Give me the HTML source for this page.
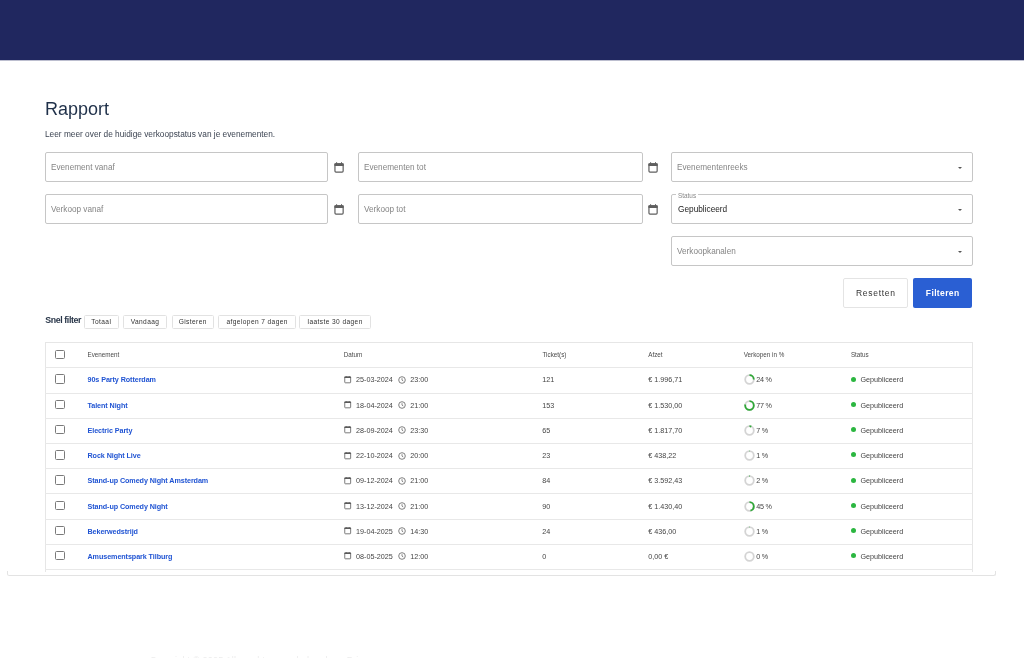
<!DOCTYPE html>
<html><head><meta charset="utf-8">
<style>
*{box-sizing:border-box;margin:0;padding:0}
html,body{width:1024px;height:658px;overflow:hidden;background:#fff;font-family:"Liberation Sans",sans-serif;color:#333}
#hdr{position:absolute;z-index:5;left:0;top:0;width:1024px;height:60.4px;background:#20275f}
#card{display:none}
h1{position:absolute;left:45px;top:98.9px;font-size:18px;font-weight:normal;color:#1f3049;white-space:nowrap}
.sub{position:absolute;left:45px;top:128.6px;font-size:8.3px;color:#3c4452;white-space:nowrap}
.fld{position:absolute;height:29.5px;border:1px solid #c6c6c6;border-radius:2px;background:#fff}
.fld span{position:absolute;left:5.3px;top:8.5px;font-size:9px;letter-spacing:0;color:#858585;white-space:nowrap;transform:scaleX(.91);transform-origin:0 0}
.fld .lg{position:absolute;left:4px;top:-3.3px;padding:0 2px;background:#fff;font-size:6.4px;letter-spacing:0;color:#888;transform:none}
.cal{position:absolute;width:12px;height:13px}
.arr{position:absolute;right:9.8px;top:13.8px;width:0;height:0;border-left:2.8px solid transparent;border-right:2.8px solid transparent;border-top:2.8px solid #555}
.btn{position:absolute;top:278.4px;height:29.5px;padding-top:1px;border-radius:2px;font-size:8.5px;letter-spacing:0.7px;text-align:center;line-height:29.5px;white-space:nowrap;padding-left:0.7px}
.snel{position:absolute;left:45.3px;top:315.4px;font-size:8.8px;font-weight:bold;color:#283548;letter-spacing:-0.4px;white-space:nowrap}
.chip{position:absolute;top:314.5px;height:14.2px;border:1px solid #e2e2e2;border-radius:1.5px;font-size:6.6px;letter-spacing:0.4px;padding-left:0.4px;color:#333;text-align:center;line-height:12.2px;white-space:nowrap}
#tbl{position:absolute;left:45px;top:342px;width:927.5px;height:229.7px;border:1px solid #e6e6e6;border-bottom:none}
.row,.hrow{position:absolute;left:45px;width:927.5px;height:25.2px;border-top:1px solid #e8e8e8}
.hrow{top:342px;border-top:none}
.row span,.row a,.hrow span{position:absolute;top:7.17px;white-space:nowrap;font-size:7.2px;color:#444}
.hrow span{font-size:6.3px;top:9.1px;color:#4a4a4a}
.cb{position:absolute;left:10.3px;top:6.2px;width:9.5px;height:9.5px;border:1.3px solid #7a7a7a;border-radius:1.5px}
.hrow .cb{top:7.5px}
.row a{left:42.5px;font-weight:bold;color:#2054d3;font-size:7.2px;letter-spacing:-0.08px;top:7.17px}
.ic{position:absolute;width:7.4px;height:7.4px;top:7.8px}
.cal2{position:absolute;left:299px;top:7.7px;width:8px;height:8px}
.clk{position:absolute;left:353px;top:7.7px;width:8px;height:8px}
.dt{left:311.1px}
.tm{left:365.3px}
.tk{left:497.25px}
.af{left:603.2px}
.ring{position:absolute;left:698.6px;top:6.2px;width:11px;height:11px}
.pc{left:711.2px;letter-spacing:-0.2px}
.dot{position:absolute;left:805.9px;top:8.5px;width:5px;height:5px;border-radius:50%;background:#2bb640}
.st{left:815.5px}
#foot{position:absolute;left:6.5px;top:571px;width:989px;height:4.8px;border:1px solid #e3e3e3;border-top:none;border-radius:0 0 2.5px 2.5px}
#tend{position:absolute;left:45px;top:569.2px;width:927.5px;height:1px;background:#e8e8e8}
</style></head><body><div id="wrap" style="position:absolute;left:0;top:0;width:1024px;height:658px;will-change:transform">
<div id="hdr"></div><div style="position:absolute;z-index:5;left:0;top:60px;width:1024px;height:1px;background:rgba(32,39,95,.3)"></div>
<div id="card"></div>
<h1>Rapport</h1>
<div class="sub">Leer meer over de huidige verkoopstatus van je evenementen.</div>

<div class="fld" style="left:45px;top:152px;width:283px"><span>Evenement vanaf</span></div>
<div class="fld" style="left:358px;top:152px;width:284.5px"><span>Evenementen tot</span></div>
<div class="fld" style="left:671px;top:152px;width:301.5px"><span>Evenementenreeks</span><i class="arr"></i></div>
<div class="fld" style="left:45px;top:194px;width:283px"><span>Verkoop vanaf</span></div>
<div class="fld" style="left:358px;top:194px;width:284.5px"><span>Verkoop tot</span></div>
<div class="fld" style="left:671px;top:194px;width:301.5px"><span class="lg">Status</span><span style="color:#222;font-size:8.8px;letter-spacing:0;top:8.7px;left:6.1px;transform:scaleX(.94)">Gepubliceerd</span><i class="arr"></i></div>
<div class="fld" style="left:671px;top:236px;width:301.5px"><span>Verkoopkanalen</span><i class="arr"></i></div>

<svg class="cal" style="left:333px;top:161px" viewBox="0 0 12 13"><rect x="1.95" y="2.8" width="8.2" height="8.3" rx="1" fill="none" stroke="#5f5f5f" stroke-width="1.2"/><rect x="1.35" y="2.3" width="9.4" height="2.6" rx="0.6" fill="#5f5f5f"/><rect x="3.2" y="1.1" width="0.9" height="2" fill="#5f5f5f"/><rect x="8" y="1.1" width="0.9" height="2" fill="#5f5f5f"/></svg>
<svg class="cal" style="left:333px;top:203px" viewBox="0 0 12 13"><rect x="1.95" y="2.8" width="8.2" height="8.3" rx="1" fill="none" stroke="#5f5f5f" stroke-width="1.2"/><rect x="1.35" y="2.3" width="9.4" height="2.6" rx="0.6" fill="#5f5f5f"/><rect x="3.2" y="1.1" width="0.9" height="2" fill="#5f5f5f"/><rect x="8" y="1.1" width="0.9" height="2" fill="#5f5f5f"/></svg>
<svg class="cal" style="left:647px;top:161px" viewBox="0 0 12 13"><rect x="1.95" y="2.8" width="8.2" height="8.3" rx="1" fill="none" stroke="#5f5f5f" stroke-width="1.2"/><rect x="1.35" y="2.3" width="9.4" height="2.6" rx="0.6" fill="#5f5f5f"/><rect x="3.2" y="1.1" width="0.9" height="2" fill="#5f5f5f"/><rect x="8" y="1.1" width="0.9" height="2" fill="#5f5f5f"/></svg>
<svg class="cal" style="left:647px;top:203px" viewBox="0 0 12 13"><rect x="1.95" y="2.8" width="8.2" height="8.3" rx="1" fill="none" stroke="#5f5f5f" stroke-width="1.2"/><rect x="1.35" y="2.3" width="9.4" height="2.6" rx="0.6" fill="#5f5f5f"/><rect x="3.2" y="1.1" width="0.9" height="2" fill="#5f5f5f"/><rect x="8" y="1.1" width="0.9" height="2" fill="#5f5f5f"/></svg>

<div class="btn" style="left:843px;width:65px;border:1px solid #e4e4e4;color:#333;line-height:27.5px">Resetten</div>
<div class="btn" style="left:913px;width:59px;background:#2a5fd3;color:#fff;font-weight:bold;letter-spacing:0.37px;padding-left:0.37px">Filteren</div>

<div class="snel">Snel filter</div>
<div class="chip" style="left:83.6px;width:35px">Totaal</div>
<div class="chip" style="left:123.1px;width:43.5px">Vandaag</div>
<div class="chip" style="left:171.5px;width:42.2px">Gisteren</div>
<div class="chip" style="left:218.4px;width:77.2px">afgelopen 7 dagen</div>
<div class="chip" style="left:299.4px;width:71.2px">laatste 30 dagen</div>

<div id="tbl"></div>
<div class="hrow"><i class="cb"></i><span style="left:42.5px">Evenement</span><span style="left:298.8px">Datum</span><span style="left:497.5px">Ticket(s)</span><span style="left:603.2px">Afzet</span><span style="left:698.7px">Verkopen in %</span><span style="left:805.9px">Status</span></div>
<div class="row" style="top:367.30px">
<i class="cb"></i><a>90s Party Rotterdam</a>
<svg class="cal2" viewBox="0 0 8 8"><rect x="0.75" y="1" width="5.9" height="5.8" rx="0.6" fill="none" stroke="#5a5a5a" stroke-width="0.8"/><rect x="0.35" y="0.6" width="6.7" height="1.5" rx="0.3" fill="#5a5a5a"/><rect x="1.9" y="0.1" width="0.6" height="1" fill="#5a5a5a"/><rect x="4.9" y="0.1" width="0.6" height="1" fill="#5a5a5a"/></svg><span class="dt">25-03-2024</span>
<svg class="clk" viewBox="0 0 8 8"><circle cx="4" cy="4" r="3.3" fill="none" stroke="#6a6a6a" stroke-width="0.85"/><path d="M4 2.2V4.1L5.3 5" fill="none" stroke="#6a6a6a" stroke-width="0.8"/></svg><span class="tm">23:00</span>
<span class="tk">121</span><span class="af">€ 1.996,71</span>
<svg class="ring" viewBox="0 0 11 11"><circle cx="5.5" cy="5.5" r="4.3" fill="none" stroke="#d4d4d4" stroke-width="1.8"/><circle cx="5.5" cy="5.5" r="4.3" fill="none" stroke="#2ea836" stroke-width="1.8" stroke-dasharray="6.48 27.02" transform="rotate(-90 5.5 5.5)"/></svg><span class="pc">24 %</span>
<i class="dot"></i><span class="st">Gepubliceerd</span>
</div>
<div class="row" style="top:392.51px">
<i class="cb"></i><a>Talent Night</a>
<svg class="cal2" viewBox="0 0 8 8"><rect x="0.75" y="1" width="5.9" height="5.8" rx="0.6" fill="none" stroke="#5a5a5a" stroke-width="0.8"/><rect x="0.35" y="0.6" width="6.7" height="1.5" rx="0.3" fill="#5a5a5a"/><rect x="1.9" y="0.1" width="0.6" height="1" fill="#5a5a5a"/><rect x="4.9" y="0.1" width="0.6" height="1" fill="#5a5a5a"/></svg><span class="dt">18-04-2024</span>
<svg class="clk" viewBox="0 0 8 8"><circle cx="4" cy="4" r="3.3" fill="none" stroke="#6a6a6a" stroke-width="0.85"/><path d="M4 2.2V4.1L5.3 5" fill="none" stroke="#6a6a6a" stroke-width="0.8"/></svg><span class="tm">21:00</span>
<span class="tk">153</span><span class="af">€ 1.530,00</span>
<svg class="ring" viewBox="0 0 11 11"><circle cx="5.5" cy="5.5" r="4.3" fill="none" stroke="#d4d4d4" stroke-width="1.8"/><circle cx="5.5" cy="5.5" r="4.3" fill="none" stroke="#2ea836" stroke-width="1.8" stroke-dasharray="20.80 27.02" transform="rotate(-90 5.5 5.5)"/></svg><span class="pc">77 %</span>
<i class="dot"></i><span class="st">Gepubliceerd</span>
</div>
<div class="row" style="top:417.72px">
<i class="cb"></i><a>Electric Party</a>
<svg class="cal2" viewBox="0 0 8 8"><rect x="0.75" y="1" width="5.9" height="5.8" rx="0.6" fill="none" stroke="#5a5a5a" stroke-width="0.8"/><rect x="0.35" y="0.6" width="6.7" height="1.5" rx="0.3" fill="#5a5a5a"/><rect x="1.9" y="0.1" width="0.6" height="1" fill="#5a5a5a"/><rect x="4.9" y="0.1" width="0.6" height="1" fill="#5a5a5a"/></svg><span class="dt">28-09-2024</span>
<svg class="clk" viewBox="0 0 8 8"><circle cx="4" cy="4" r="3.3" fill="none" stroke="#6a6a6a" stroke-width="0.85"/><path d="M4 2.2V4.1L5.3 5" fill="none" stroke="#6a6a6a" stroke-width="0.8"/></svg><span class="tm">23:30</span>
<span class="tk">65</span><span class="af">€ 1.817,70</span>
<svg class="ring" viewBox="0 0 11 11"><circle cx="5.5" cy="5.5" r="4.3" fill="none" stroke="#d4d4d4" stroke-width="1.8"/><circle cx="5.5" cy="5.5" r="4.3" fill="none" stroke="#2ea836" stroke-width="1.8" stroke-dasharray="1.89 27.02" transform="rotate(-90 5.5 5.5)"/></svg><span class="pc">7 %</span>
<i class="dot"></i><span class="st">Gepubliceerd</span>
</div>
<div class="row" style="top:442.93px">
<i class="cb"></i><a>Rock Night Live</a>
<svg class="cal2" viewBox="0 0 8 8"><rect x="0.75" y="1" width="5.9" height="5.8" rx="0.6" fill="none" stroke="#5a5a5a" stroke-width="0.8"/><rect x="0.35" y="0.6" width="6.7" height="1.5" rx="0.3" fill="#5a5a5a"/><rect x="1.9" y="0.1" width="0.6" height="1" fill="#5a5a5a"/><rect x="4.9" y="0.1" width="0.6" height="1" fill="#5a5a5a"/></svg><span class="dt">22-10-2024</span>
<svg class="clk" viewBox="0 0 8 8"><circle cx="4" cy="4" r="3.3" fill="none" stroke="#6a6a6a" stroke-width="0.85"/><path d="M4 2.2V4.1L5.3 5" fill="none" stroke="#6a6a6a" stroke-width="0.8"/></svg><span class="tm">20:00</span>
<span class="tk">23</span><span class="af">€ 438,22</span>
<svg class="ring" viewBox="0 0 11 11"><circle cx="5.5" cy="5.5" r="4.3" fill="none" stroke="#d4d4d4" stroke-width="1.8"/><circle cx="5.5" cy="5.5" r="4.3" fill="none" stroke="#2ea836" stroke-width="1.8" stroke-dasharray="0.27 27.02" transform="rotate(-90 5.5 5.5)"/></svg><span class="pc">1 %</span>
<i class="dot"></i><span class="st">Gepubliceerd</span>
</div>
<div class="row" style="top:468.14px">
<i class="cb"></i><a>Stand-up Comedy Night Amsterdam</a>
<svg class="cal2" viewBox="0 0 8 8"><rect x="0.75" y="1" width="5.9" height="5.8" rx="0.6" fill="none" stroke="#5a5a5a" stroke-width="0.8"/><rect x="0.35" y="0.6" width="6.7" height="1.5" rx="0.3" fill="#5a5a5a"/><rect x="1.9" y="0.1" width="0.6" height="1" fill="#5a5a5a"/><rect x="4.9" y="0.1" width="0.6" height="1" fill="#5a5a5a"/></svg><span class="dt">09-12-2024</span>
<svg class="clk" viewBox="0 0 8 8"><circle cx="4" cy="4" r="3.3" fill="none" stroke="#6a6a6a" stroke-width="0.85"/><path d="M4 2.2V4.1L5.3 5" fill="none" stroke="#6a6a6a" stroke-width="0.8"/></svg><span class="tm">21:00</span>
<span class="tk">84</span><span class="af">€ 3.592,43</span>
<svg class="ring" viewBox="0 0 11 11"><circle cx="5.5" cy="5.5" r="4.3" fill="none" stroke="#d4d4d4" stroke-width="1.8"/><circle cx="5.5" cy="5.5" r="4.3" fill="none" stroke="#2ea836" stroke-width="1.8" stroke-dasharray="0.54 27.02" transform="rotate(-90 5.5 5.5)"/></svg><span class="pc">2 %</span>
<i class="dot"></i><span class="st">Gepubliceerd</span>
</div>
<div class="row" style="top:493.35px">
<i class="cb"></i><a>Stand-up Comedy Night</a>
<svg class="cal2" viewBox="0 0 8 8"><rect x="0.75" y="1" width="5.9" height="5.8" rx="0.6" fill="none" stroke="#5a5a5a" stroke-width="0.8"/><rect x="0.35" y="0.6" width="6.7" height="1.5" rx="0.3" fill="#5a5a5a"/><rect x="1.9" y="0.1" width="0.6" height="1" fill="#5a5a5a"/><rect x="4.9" y="0.1" width="0.6" height="1" fill="#5a5a5a"/></svg><span class="dt">13-12-2024</span>
<svg class="clk" viewBox="0 0 8 8"><circle cx="4" cy="4" r="3.3" fill="none" stroke="#6a6a6a" stroke-width="0.85"/><path d="M4 2.2V4.1L5.3 5" fill="none" stroke="#6a6a6a" stroke-width="0.8"/></svg><span class="tm">21:00</span>
<span class="tk">90</span><span class="af">€ 1.430,40</span>
<svg class="ring" viewBox="0 0 11 11"><circle cx="5.5" cy="5.5" r="4.3" fill="none" stroke="#d4d4d4" stroke-width="1.8"/><circle cx="5.5" cy="5.5" r="4.3" fill="none" stroke="#2ea836" stroke-width="1.8" stroke-dasharray="12.16 27.02" transform="rotate(-90 5.5 5.5)"/></svg><span class="pc">45 %</span>
<i class="dot"></i><span class="st">Gepubliceerd</span>
</div>
<div class="row" style="top:518.56px">
<i class="cb"></i><a>Bekerwedstrijd</a>
<svg class="cal2" viewBox="0 0 8 8"><rect x="0.75" y="1" width="5.9" height="5.8" rx="0.6" fill="none" stroke="#5a5a5a" stroke-width="0.8"/><rect x="0.35" y="0.6" width="6.7" height="1.5" rx="0.3" fill="#5a5a5a"/><rect x="1.9" y="0.1" width="0.6" height="1" fill="#5a5a5a"/><rect x="4.9" y="0.1" width="0.6" height="1" fill="#5a5a5a"/></svg><span class="dt">19-04-2025</span>
<svg class="clk" viewBox="0 0 8 8"><circle cx="4" cy="4" r="3.3" fill="none" stroke="#6a6a6a" stroke-width="0.85"/><path d="M4 2.2V4.1L5.3 5" fill="none" stroke="#6a6a6a" stroke-width="0.8"/></svg><span class="tm">14:30</span>
<span class="tk">24</span><span class="af">€ 436,00</span>
<svg class="ring" viewBox="0 0 11 11"><circle cx="5.5" cy="5.5" r="4.3" fill="none" stroke="#d4d4d4" stroke-width="1.8"/><circle cx="5.5" cy="5.5" r="4.3" fill="none" stroke="#2ea836" stroke-width="1.8" stroke-dasharray="0.27 27.02" transform="rotate(-90 5.5 5.5)"/></svg><span class="pc">1 %</span>
<i class="dot"></i><span class="st">Gepubliceerd</span>
</div>
<div class="row" style="top:543.77px">
<i class="cb"></i><a>Amusementspark Tilburg</a>
<svg class="cal2" viewBox="0 0 8 8"><rect x="0.75" y="1" width="5.9" height="5.8" rx="0.6" fill="none" stroke="#5a5a5a" stroke-width="0.8"/><rect x="0.35" y="0.6" width="6.7" height="1.5" rx="0.3" fill="#5a5a5a"/><rect x="1.9" y="0.1" width="0.6" height="1" fill="#5a5a5a"/><rect x="4.9" y="0.1" width="0.6" height="1" fill="#5a5a5a"/></svg><span class="dt">08-05-2025</span>
<svg class="clk" viewBox="0 0 8 8"><circle cx="4" cy="4" r="3.3" fill="none" stroke="#6a6a6a" stroke-width="0.85"/><path d="M4 2.2V4.1L5.3 5" fill="none" stroke="#6a6a6a" stroke-width="0.8"/></svg><span class="tm">12:00</span>
<span class="tk">0</span><span class="af">0,00 €</span>
<svg class="ring" viewBox="0 0 11 11"><circle cx="5.5" cy="5.5" r="4.3" fill="none" stroke="#d4d4d4" stroke-width="1.8"/><circle cx="5.5" cy="5.5" r="4.3" fill="none" stroke="#2ea836" stroke-width="1.8" stroke-dasharray="0.00 27.02" transform="rotate(-90 5.5 5.5)"/></svg><span class="pc">0 %</span>
<i class="dot"></i><span class="st">Gepubliceerd</span>
</div><div id="tend"></div><div id="foot"></div><div style="position:absolute;left:150px;top:655.3px;font-size:9px;color:#ececec;white-space:nowrap;letter-spacing:0.2px">Copyright © 2025 Alle rechten voorbehouden · Privacy</div>
</div></body></html>
